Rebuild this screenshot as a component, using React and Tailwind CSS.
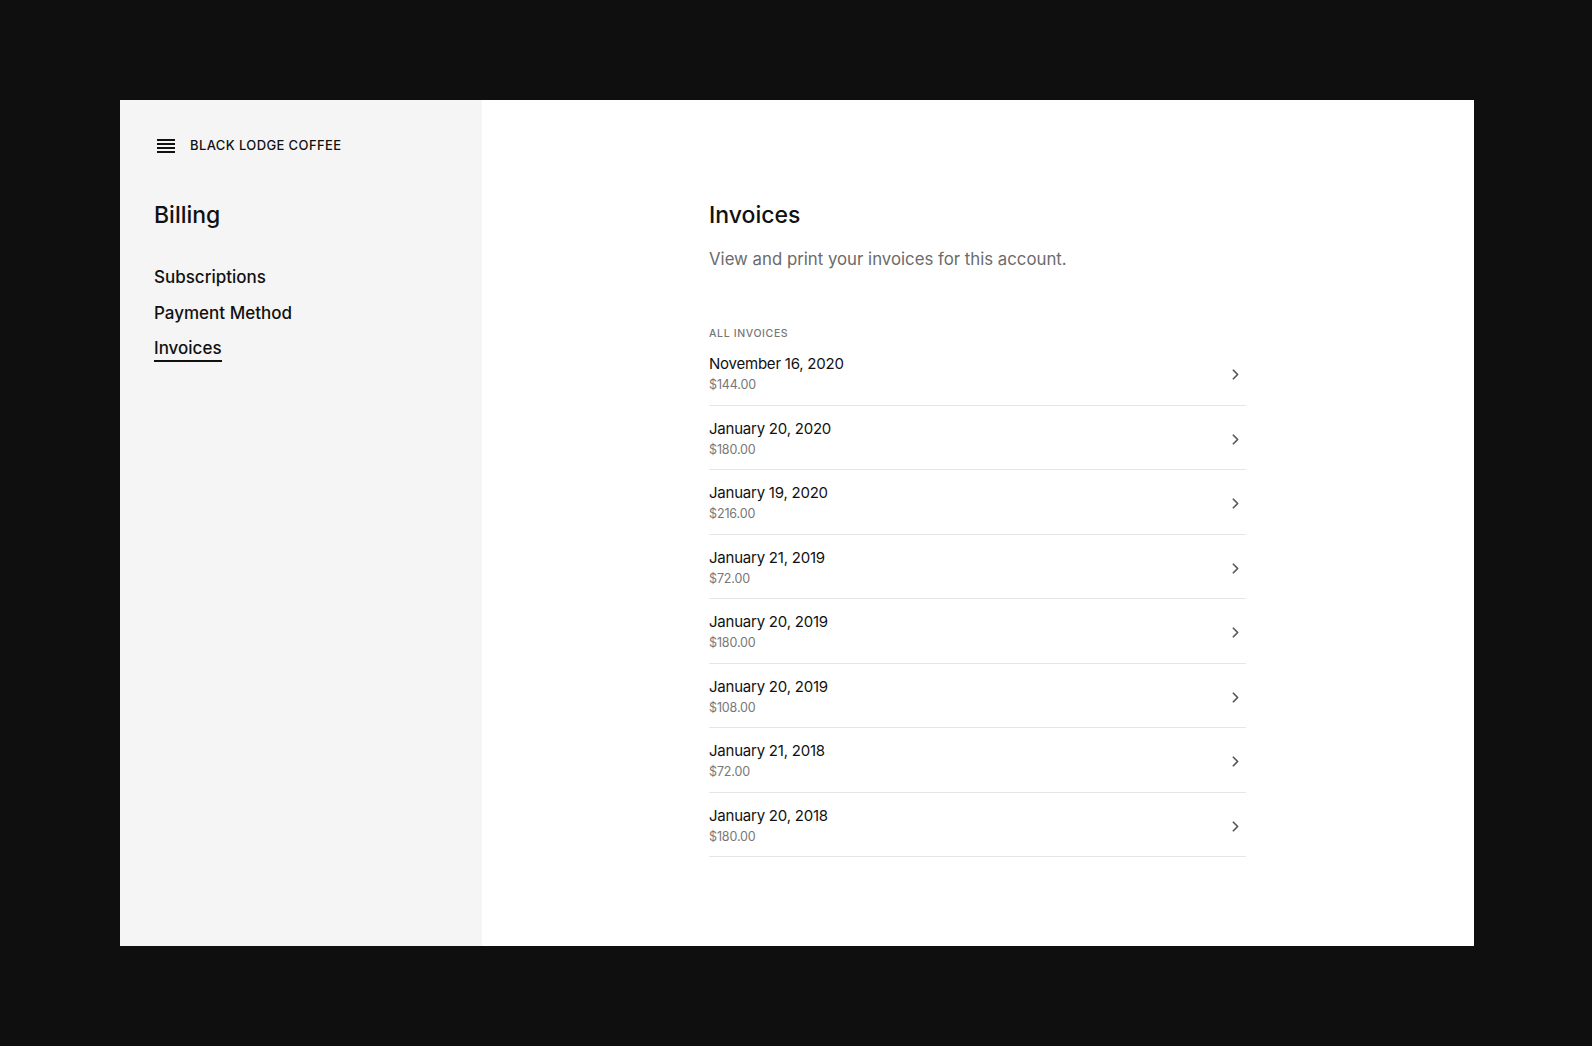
import { ChevronRight } from 'lucide-react'

const invoices = [
  { date: 'November 16, 2020', amount: '$144.00' },
  { date: 'January 20, 2020', amount: '$180.00' },
  { date: 'January 19, 2020', amount: '$216.00' },
  { date: 'January 21, 2019', amount: '$72.00' },
  { date: 'January 20, 2019', amount: '$180.00' },
  { date: 'January 20, 2019', amount: '$108.00' },
  { date: 'January 21, 2018', amount: '$72.00' },
  { date: 'January 20, 2018', amount: '$180.00' },
]

function MenuIcon() {
  return (
    <div className="flex flex-col gap-[2px] w-[18px]" aria-hidden="true">
      <span className="h-[2px] bg-[#111]" />
      <span className="h-[2px] bg-[#111]" />
      <span className="h-[2px] bg-[#111]" />
      <span className="h-[2px] bg-[#111]" />
    </div>
  )
}

function Sidebar() {
  return (
    <aside className="w-[362px] shrink-0 bg-[#f5f5f5] pl-[34px] pt-[37px]">
      <div className="flex items-center h-[18px] gap-[15px] pl-[3px]">
        <MenuIcon />
        <span className="text-[13px] font-medium tracking-[0.03em] text-[#111]">BLACK LODGE COFFEE</span>
      </div>

      <h1 className="mt-[46px] text-[23px] leading-[28px] font-medium text-[#111]">Billing</h1>

      <nav className="mt-[36px] flex flex-col gap-[11.5px] text-[17px] leading-[24px] font-medium text-[#111]">
        <a className="self-start">Subscriptions</a>
        <a className="self-start">Payment Method</a>
        <a className="self-start relative">
          Invoices
          <span className="absolute left-0 right-0 bottom-[-2px] h-[2px] bg-[#111]" />
        </a>
      </nav>
    </aside>
  )
}

export default function App() {
  return (
    <div
      className="w-full h-[1046px] bg-[#0f0f0f] pt-[100px] pl-[120px]"
      style={{ fontFamily: 'Inter, "Noto Sans", sans-serif' }}
    >
      <div className="w-[1354px] h-[846px] flex">
        <Sidebar />

        <main className="flex-1 bg-white pl-[227px] pt-[101px]">
          <div className="w-[537px]">
            <h2 className="text-[23px] leading-[28px] font-medium text-[#111]">Invoices</h2>
            <p className="mt-[18px] text-[16.8px] leading-[24px] text-[#6b6b6b]">
              View and print your invoices for this account.
            </p>

            <div className="mt-[56px] text-[10.5px] leading-[14px] font-medium tracking-[0.06em] text-[#777]">
              ALL INVOICES
            </div>

            <ul>
              {invoices.map((inv, i) => (
                <li
                  key={i}
                  className="flex items-center justify-between border-b border-[#e6e6e6] pt-[13px] pb-[9.5px]"
                >
                  <div>
                    <div className="text-[15px] leading-[20px] tracking-[-0.015em] text-[#111]">{inv.date}</div>
                    <div className="mt-[1px] text-[12.5px] leading-[20px] tracking-[-0.01em] text-[#777]">{inv.amount}</div>
                  </div>
                  <ChevronRight size={17} strokeWidth={2.4} className="text-[#555] mr-[2px]" />
                </li>
              ))}
            </ul>
          </div>
        </main>
      </div>
    </div>
  )
}
